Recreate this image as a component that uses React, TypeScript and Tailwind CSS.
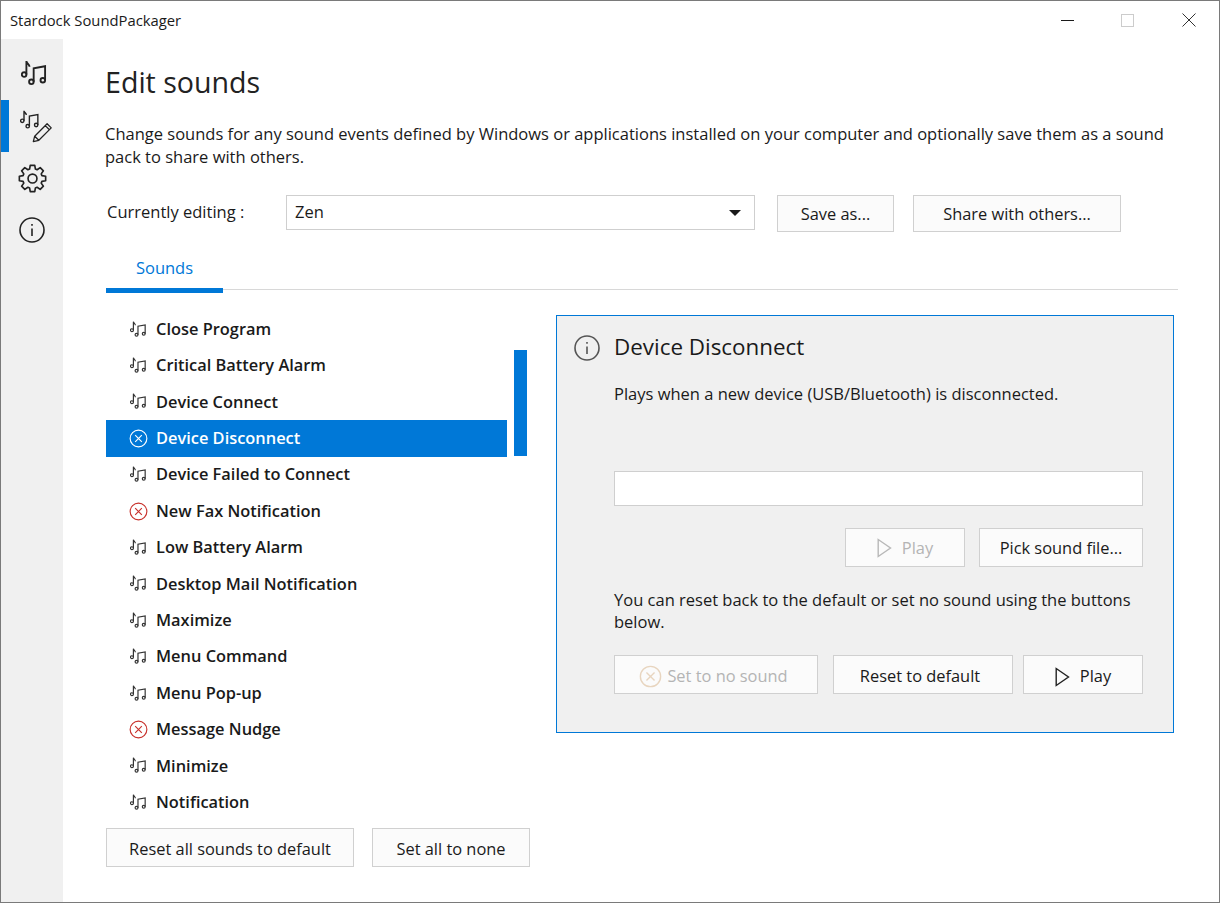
const sounds = [
  { name: 'Close Program' },
  { name: 'Critical Battery Alarm' },
  { name: 'Device Connect' },
  { name: 'Device Disconnect', selected: true },
  { name: 'Device Failed to Connect' },
  { name: 'New Fax Notification', none: true },
  { name: 'Low Battery Alarm' },
  { name: 'Desktop Mail Notification' },
  { name: 'Maximize' },
  { name: 'Menu Command' },
  { name: 'Menu Pop-up' },
  { name: 'Message Nudge', none: true },
  { name: 'Minimize' },
  { name: 'Notification' },
];

// small quaver plus beamed pair, used in the sidebar and in the list
const Notes = ({ className = '' }: { className?: string }) => (
  <svg viewBox="0 0 26 26" fill="none" stroke="currentColor" strokeWidth="1.8" className={className}>
    <circle cx="3" cy="14" r="2.2" />
    <path d="M5.2 14V1c.3 2.5 3 3 3 5.5" />
    <circle cx="10" cy="21" r="2.2" />
    <circle cx="21" cy="19.5" r="2.2" />
    <path d="M12.2 21V8L23.2 6v13.5" />
  </svg>
);

const CircleX = ({ className = '' }: { className?: string }) => (
  <svg viewBox="0 0 20 20" fill="none" stroke="currentColor" strokeWidth="1.2" className={className}>
    <circle cx="10" cy="10" r="8.8" />
    <path d="M6.5 6.5l7 7M13.5 6.5l-7 7" />
  </svg>
);

const Info = ({ className = '' }: { className?: string }) => (
  <svg viewBox="0 0 26 26" fill="none" stroke="currentColor" strokeWidth="1.6" className={className}>
    <circle cx="13" cy="13" r="12" />
    <path d="M13 11.5v7.5" />
    <path d="M13 7v1.8" />
  </svg>
);

// eight tooth cog, outline worked out from the angles
const gearPath = Array.from({ length: 8 }, (_, i) => {
  const a = (i * Math.PI) / 4;
  const pt = (r: number, d: number) => `${(15 + r * Math.cos(a + d)).toFixed(2)} ${(15 + r * Math.sin(a + d)).toFixed(2)}`;
  return `${i === 0 ? 'M' : 'L'}${pt(10.2, -0.3)} L${pt(13.8, -0.17)} L${pt(13.8, 0.17)} L${pt(10.2, 0.3)}`;
}).join(' ') + ' Z';

const Gear = ({ className = '' }: { className?: string }) => (
  <svg viewBox="0 0 30 30" fill="none" stroke="currentColor" strokeWidth="1.7" strokeLinejoin="round" className={className}>
    <path d={gearPath} />
    <circle cx="15" cy="15" r="4.6" />
  </svg>
);

const Triangle = ({ className = '' }: { className?: string }) => (
  <svg viewBox="0 0 15 20" fill="none" stroke="currentColor" strokeWidth="1.4" className={className}>
    <path d="M1.2 1.5v17L13.5 10z" />
  </svg>
);

const Btn = ({ className = '', disabled = false, children }: { className?: string; disabled?: boolean; children: React.ReactNode }) => (
  <div className={`flex items-center justify-center border border-[#d0d0d0] bg-[#fbfbfb] text-[16.4px] ${disabled ? 'text-[#b4b4b4]' : 'text-[#1a1a1a]'} ${className}`}>
    {children}
  </div>
);

export default function App() {
  return (
    <div className="flex h-[903px] w-[1220px] flex-col overflow-hidden border border-[#7a7a7a] bg-white font-['Open_Sans',sans-serif] text-[16.5px] text-[#1a1a1a]">
      {/* title bar */}
      <div className="flex h-[38px] shrink-0 items-center justify-between">
        <span className="ml-[9px] mt-[1px] text-[14.8px]">Stardock SoundPackager</span>
        <div className="flex items-center">
          <span className="h-px w-[13px] bg-[#1a1a1a]" />
          <span className="ml-[47px] h-[13px] w-[13px] border border-[#cccccc]" />
          <svg viewBox="0 0 14 14" fill="none" stroke="#333" strokeWidth="1" className="ml-[48px] mr-[23px] h-[14px] w-[14px]">
            <path d="M0.5 0.5l13 13M13.5 0.5l-13 13" />
          </svg>
        </div>
      </div>

      <div className="flex min-h-0 flex-1">
        {/* sidebar */}
        <div className="flex w-[62px] shrink-0 flex-col bg-[#f0f0f0]">
          <div className="flex h-[61px] items-start pl-[20px] pt-[21px]">
            <Notes className="h-[27px] w-[27px] text-[#222]" />
          </div>
          <div className="flex h-[52px] border-l-[8px] border-[#0078d7]">
            <div className="relative ml-[11px] mt-[10px] h-[36px] w-[34px]">
              <Notes className="h-[20px] w-[20px] text-[#222]" />
              <svg viewBox="0 0 20 20" fill="none" stroke="#222" strokeWidth="1.1" strokeLinejoin="round" className="absolute left-[11px] top-[11px] h-[23px] w-[23px]">
                <path d="M2 18l1.2-4.8L14 2.4l3.6 3.6L6.8 16.8zM3.2 13.2l3.6 3.6M12.4 4l3.6 3.6" />
              </svg>
            </div>
          </div>
          <div className="flex h-[53px] items-center pl-[17px]">
            <Gear className="h-[29px] w-[29px] text-[#222]" />
          </div>
          <div className="flex h-[50px] items-center pl-[18px]">
            <Info className="h-[26px] w-[26px] text-[#222]" />
          </div>
        </div>

        {/* main */}
        <div className="flex min-w-0 flex-1 flex-col pl-[43px] pr-[41px]">
          <h1 className="-ml-[1px] mt-[23px] h-[40px] text-[28.6px] leading-[40px] text-[#222]">Edit sounds</h1>
          <p className="-ml-[1px] mt-[20px] h-[46px] leading-[23px]">
            Change sounds for any sound events defined by Windows or applications installed on your computer and optionally save them as a sound pack to share with others.
          </p>

          <div className="mt-[27px] flex h-[37px] items-start">
            <span className="ml-[1px] mt-[5px] w-[179px]">Currently editing :</span>
            <div className="flex h-[35px] w-[469px] items-center justify-between border border-[#cfcfcf] pl-[8px] pr-[13px]">
              <span>Zen</span>
              <span className="h-0 w-0 border-x-[6px] border-t-[6px] border-x-transparent border-t-[#1a1a1a]" />
            </div>
            <Btn className="ml-[22px] h-[37px] w-[117px] pt-[2px]">Save as...</Btn>
            <Btn className="ml-[19px] h-[37px] w-[208px] pt-[2px]">Share with others...</Btn>
          </div>

          {/* tab strip */}
          <div className="relative flex h-[61px] items-end">
            <div className="absolute bottom-[3px] left-0 right-0 h-px bg-[#d8d8d8]" />
            <div className="relative flex h-[45px] w-[117px] items-start justify-center border-b-[5px] border-[#0078d7] pt-[8px] font-medium text-[#0078d7]">
              Sounds
            </div>
          </div>

          <div className="mt-[18px] flex min-h-0 items-start">
            {/* sound list */}
            <div className="w-[424px] shrink-0">
              <div className="flex">
                <div className="w-[401px] shrink-0">
                  {sounds.map((s) => (
                    <div key={s.name} className={`flex h-[36.4px] items-center pl-[23px] font-[550] ${s.selected ? 'bg-[#0078d7] text-white' : ''}`}>
                      {s.selected ? (
                        <CircleX className="h-[19px] w-[19px] text-white" />
                      ) : s.none ? (
                        <CircleX className="h-[19px] w-[19px] text-[#c8312b]" />
                      ) : (
                        <Notes className="ml-px h-[17px] w-[17px] text-[#333]" />
                      )}
                      <span className={`${!s.selected && !s.none ? 'ml-[9px]' : 'ml-[8px]'} text-[16.4px]`}>{s.name}</span>
                    </div>
                  ))}
                </div>
                <div className="ml-[7px] mt-[39px] h-[106px] w-[13px] bg-[#0078d7]" />
              </div>
              <div className="mt-[8px] flex gap-[18px]">
                <Btn className="h-[39px] w-[248px] pt-[3px]">Reset all sounds to default</Btn>
                <Btn className="h-[39px] w-[158px] pt-[3px]">Set all to none</Btn>
              </div>
            </div>

            {/* detail panel */}
            <div className="ml-[26px] mt-[4px] h-[418px] w-[618px] shrink-0 border border-[#0078d7] bg-[#f0f0f0] pl-[57px] pr-[30px]">
              <div className="relative mt-[13px] h-[36px] text-[22.4px] leading-[36px]">
                <Info className="absolute left-[-40px] top-[6px] h-[26px] w-[26px] text-[#555]" />
                Device Disconnect
              </div>
              <p className="mt-[17px] h-[24px] leading-[24px]">Plays when a new device (USB/Bluetooth) is disconnected.</p>
              <div className="mt-[65px] h-[35px] border border-[#cfcfcf] bg-white" />
              <div className="mt-[22px] flex justify-end gap-[14px]">
                <Btn disabled className="h-[39px] w-[120px] pt-[1px]">
                  <Triangle className="mr-[10px] h-[20px] w-[15px] text-[#b8b8b8]" />
                  Play
                </Btn>
                <Btn className="h-[39px] w-[164px] pt-[1px]">Pick sound file...</Btn>
              </div>
              <p className="mt-[22px] h-[46px] leading-[22px]">You can reset back to the default or set no sound using the buttons below.</p>
              <div className="mt-[20px] flex">
                <Btn disabled className="h-[39px] w-[204px] pr-[5px] pt-[4px]">
                  <CircleX className="mr-[5px] h-[23px] w-[23px] text-[#e8d5bf]" />
                  Set to no sound
                </Btn>
                <Btn className="ml-[15px] h-[39px] w-[180px] pr-[6px] pt-[4px]">Reset to default</Btn>
                <Btn className="ml-[10px] h-[39px] w-[120px] pt-[4px]">
                  <Triangle className="mr-[10px] h-[20px] w-[15px] text-[#222]" />
                  Play
                </Btn>
              </div>
            </div>
          </div>
        </div>
      </div>
    </div>
  );
}
